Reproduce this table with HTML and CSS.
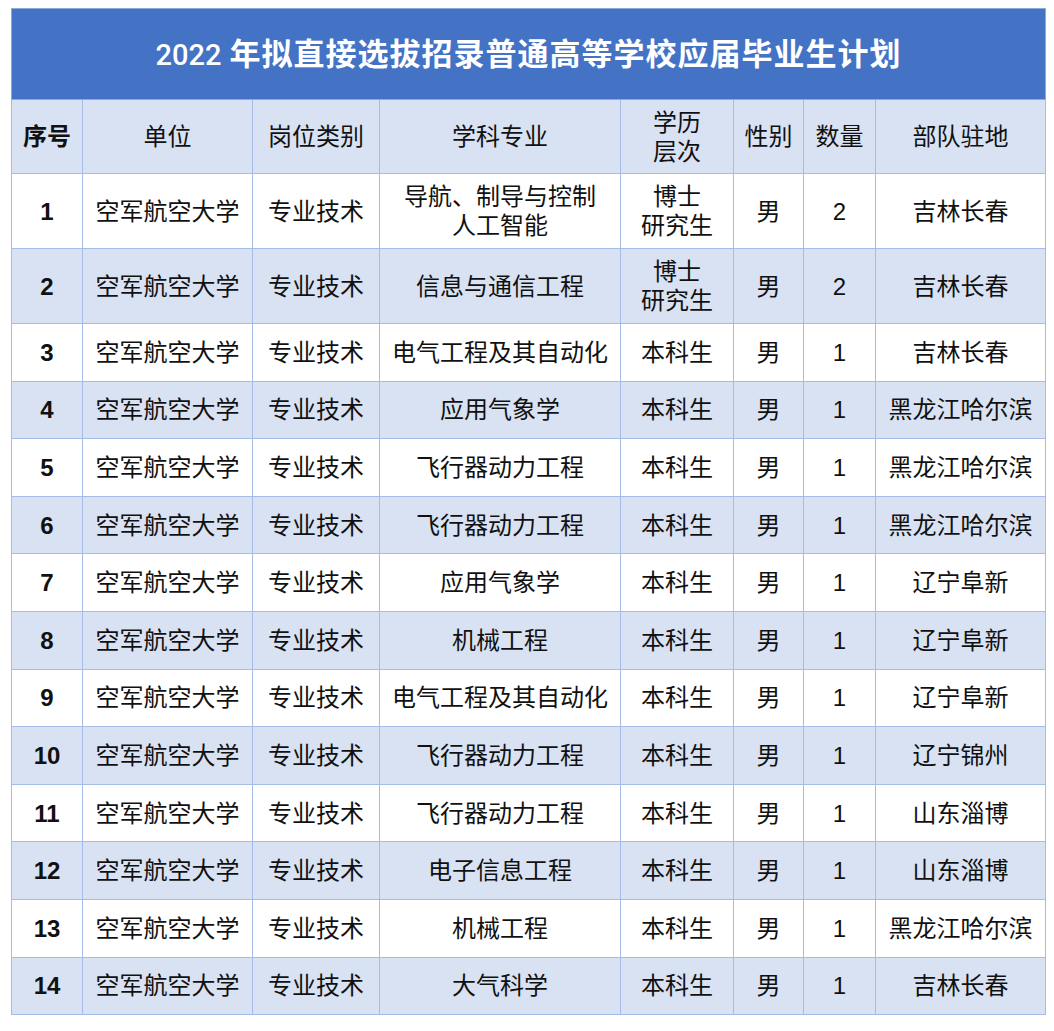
FILE: index.html
```html
<!DOCTYPE html>
<html lang="zh-CN">
<head>
<meta charset="utf-8">
<title>2022 年拟直接选拔招录普通高等学校应届毕业生计划</title>
<link rel="stylesheet" href="styles.css">
</head>
<body>
<table class="plan">
  <colgroup>
    <col class="c-no"><col class="c-unit"><col class="c-type"><col class="c-major"><col class="c-edu"><col class="c-sex"><col class="c-num"><col class="c-loc">
  </colgroup>
  <thead>
    <tr class="title-row"><th colspan="8" class="title"><span class="year">2022</span> 年拟直接选拔招录普通高等学校应届毕业生计划</th></tr>
    <tr class="head-row">
      <th class="no">序号</th><th>单位</th><th>岗位类别</th><th>学科专业</th><th>学历<br>层次</th><th>性别</th><th>数量</th><th>部队驻地</th>
    </tr>
  </thead>
  <tbody>
    <tr class="tall"><td class="no">1</td><td>空军航空大学</td><td>专业技术</td><td>导航、制导与控制<br>人工智能</td><td>博士<br>研究生</td><td>男</td><td class="num">2</td><td>吉林长春</td></tr>
    <tr class="tall alt"><td class="no">2</td><td>空军航空大学</td><td>专业技术</td><td>信息与通信工程</td><td>博士<br>研究生</td><td>男</td><td class="num">2</td><td>吉林长春</td></tr>
    <tr><td class="no">3</td><td>空军航空大学</td><td>专业技术</td><td>电气工程及其自动化</td><td>本科生</td><td>男</td><td class="num">1</td><td>吉林长春</td></tr>
    <tr class="alt"><td class="no">4</td><td>空军航空大学</td><td>专业技术</td><td>应用气象学</td><td>本科生</td><td>男</td><td class="num">1</td><td>黑龙江哈尔滨</td></tr>
    <tr><td class="no">5</td><td>空军航空大学</td><td>专业技术</td><td>飞行器动力工程</td><td>本科生</td><td>男</td><td class="num">1</td><td>黑龙江哈尔滨</td></tr>
    <tr class="alt"><td class="no">6</td><td>空军航空大学</td><td>专业技术</td><td>飞行器动力工程</td><td>本科生</td><td>男</td><td class="num">1</td><td>黑龙江哈尔滨</td></tr>
    <tr><td class="no">7</td><td>空军航空大学</td><td>专业技术</td><td>应用气象学</td><td>本科生</td><td>男</td><td class="num">1</td><td>辽宁阜新</td></tr>
    <tr class="alt"><td class="no">8</td><td>空军航空大学</td><td>专业技术</td><td>机械工程</td><td>本科生</td><td>男</td><td class="num">1</td><td>辽宁阜新</td></tr>
    <tr><td class="no">9</td><td>空军航空大学</td><td>专业技术</td><td>电气工程及其自动化</td><td>本科生</td><td>男</td><td class="num">1</td><td>辽宁阜新</td></tr>
    <tr class="alt"><td class="no">10</td><td>空军航空大学</td><td>专业技术</td><td>飞行器动力工程</td><td>本科生</td><td>男</td><td class="num">1</td><td>辽宁锦州</td></tr>
    <tr><td class="no">11</td><td>空军航空大学</td><td>专业技术</td><td>飞行器动力工程</td><td>本科生</td><td>男</td><td class="num">1</td><td>山东淄博</td></tr>
    <tr class="alt"><td class="no">12</td><td>空军航空大学</td><td>专业技术</td><td>电子信息工程</td><td>本科生</td><td>男</td><td class="num">1</td><td>山东淄博</td></tr>
    <tr><td class="no">13</td><td>空军航空大学</td><td>专业技术</td><td>机械工程</td><td>本科生</td><td>男</td><td class="num">1</td><td>黑龙江哈尔滨</td></tr>
    <tr class="alt"><td class="no">14</td><td>空军航空大学</td><td>专业技术</td><td>大气科学</td><td>本科生</td><td>男</td><td class="num">1</td><td>吉林长春</td></tr>
  </tbody>
</table>
</body>
</html>
```

FILE: styles.css
```css
html, body {
  margin: 0;
  padding: 0;
  background: #ffffff;
}

body {
  padding: 8px 0 0 11px;
  font-family: "Liberation Sans", "Noto Sans CJK SC", sans-serif;
  color: #111111;
}

.plan {
  border-collapse: collapse;
  table-layout: fixed;
  width: 1034px;
}

.c-no { width: 71px; }
.c-unit { width: 170px; }
.c-type { width: 127px; }
.c-major { width: 241px; }
.c-edu { width: 113px; }
.c-sex { width: 70px; }
.c-num { width: 72px; }
.c-loc { width: 170px; }

.plan th,
.plan td {
  border: 1px solid #a4bce6;
  padding: 0;
  text-align: center;
  vertical-align: middle;
  font-size: 24px;
  line-height: 29px;
  font-weight: normal;
}

.title-row {
  height: 91px;
}

.plan th.title {
  background: #4472c4;
  color: #ffffff;
  font-family: "Noto Sans CJK SC", sans-serif;
  font-size: 31px;
  font-weight: bold;
  letter-spacing: 1px;
  border-color: #8eaadb;
  padding-bottom: 2px;
}

.plan th.title .year {
  font-family: Roboto, "Noto Sans CJK SC", sans-serif;
  font-weight: 500;
  font-size: 29px;
  letter-spacing: 0;
}

.head-row {
  height: 74px;
  background: #d9e2f3;
}

.plan tbody tr {
  height: 57.6px;
}

.plan tbody tr.tall {
  height: 75px;
}

.plan tbody tr.alt {
  background: #d9e2f3;
}

.plan .no {
  font-weight: bold;
}

.plan th.no {
  font-weight: bold;
}
```
